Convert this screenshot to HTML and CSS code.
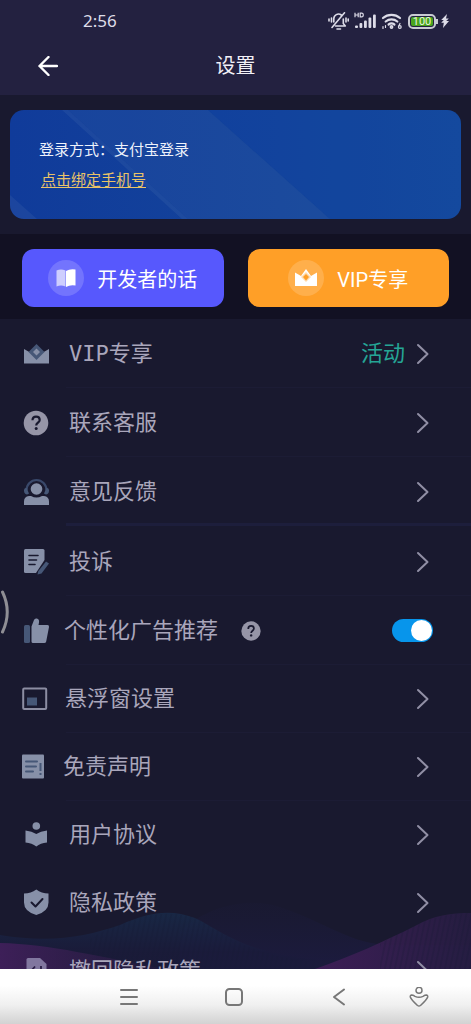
FILE: index.html
```html
<!DOCTYPE html>
<html lang="zh-CN">
<head>
<meta charset="utf-8">
<meta name="viewport" content="width=device-width, initial-scale=1">
<title>设置</title>
<link rel="stylesheet" href="styles.css">
</head>
<body>
<svg class="defs" aria-hidden="true">
  <symbol id="chevron" viewBox="0 0 14 22"><path d="M2 2l9.500 9L2 20" fill="none" stroke="currentColor" stroke-width="2" stroke-linecap="round" stroke-linejoin="round"/></symbol>
  <symbol id="question" viewBox="0 0 28 28"><circle cx="14" cy="14" r="12.300" fill="currentColor"/><path d="M10.500 11.300c0-2.300 1.500-3.700 3.600-3.700s3.600 1.300 3.600 3.300c0 2.600-3.500 3-3.500 5.600" fill="none" stroke="#19192f" stroke-width="2.200"/><circle cx="14.200" cy="19.600" r="1.500" fill="#19192f"/></symbol>
</svg>

<div class="screen">
  <header class="header">
    <div class="status">
      <span class="time">2:56</span>
      <div class="status-icons">
        <svg width="21" height="18" viewBox="0 0 21 18" fill="none" stroke="currentColor" stroke-width="1.600" stroke-linecap="round" stroke-linejoin="round">
          <path d="M5.800 10V7a4.700 4.700 0 0 1 7.500-4M15.300 7v4.500l2 2.500H7.500M16.500 .8L4 15.500M9 17h3.500M3.500 6v4M1 7v2M18 6v4M20.200 7v2"/>
        </svg>
        <svg width="22" height="18" viewBox="0 0 22 18" fill="currentColor">
          <path d="M1 .8v4.400M4.200 .8v4.400M1 3h3.200M6.200 1.200h1.500a1.500 1.500 0 0 1 1.500 1.800a1.500 1.500 0 0 1-1.500 1.800H6.200z" fill="none" stroke="currentColor" stroke-width="1.200"/>
          <rect x="1" y="13.500" width="3" height="2.500" rx="1"/><rect x="5.500" y="11" width="2.800" height="5" rx="1"/><rect x="10" y="8.500" width="2.800" height="7.500" rx="1"/><rect x="14.500" y="5.500" width="2.800" height="10.500" rx="1"/><rect x="19" y="2.500" width="2.800" height="13.500" rx="1"/>
        </svg>
        <svg width="22" height="18" viewBox="0 0 22 18" fill="none" stroke="currentColor" stroke-width="2.200" stroke-linecap="round">
          <path d="M2 6a13 13 0 0 1 17 0M4.700 9.500a9 9 0 0 1 11.600 0M7.600 12.500a5 5 0 0 1 5.800 0"/><circle cx="10.500" cy="15" r=".8"/>
          <path d="M2 14.500v2M4.500 13.500v2M19 11.500l-1.200 2.500" stroke-width="1.200"/><circle cx="18.800" cy="15" r="1.400" stroke-width="1.200"/>
        </svg>
        <div class="battery"><span class="battery-level">100</span></div>
        <svg width="8" height="14" viewBox="0 0 8 14" fill="currentColor"><path d="M6 0L.2 6h2.600L.2 8.800h2.600L2 14l6-7H5.200L7.800 4.500H5z"/></svg>
      </div>
    </div>
    <div class="titlebar">
      <button class="back" aria-label="返回"><svg width="20" height="20" viewBox="0 0 20 20" fill="none" stroke="currentColor" stroke-width="2.400" stroke-linecap="round" stroke-linejoin="round"><path d="M10.500 1L1.500 10l9 9M1.500 10H19"/></svg></button>
      <h1 class="title">设置</h1>
    </div>
  </header>

  <main class="content">
    <svg class="waves" viewBox="0 0 471 100" preserveAspectRatio="none" aria-hidden="true">
      <defs>
        <pattern id="mesh" width="5" height="5" patternUnits="userSpaceOnUse" patternTransform="skewX(-12)"><path d="M1 0v5" stroke="#14152d" stroke-width="1" opacity=".4"/></pattern>
        <linearGradient id="teal" x1="0" y1="0" x2="0" y2="1"><stop offset="0" stop-color="#182b4a"/><stop offset=".7" stop-color="#1a1b3b"/></linearGradient>
        <linearGradient id="plum" x1="0" y1="0" x2="1" y2="0"><stop offset="0" stop-color="#3d1f58"/><stop offset="1" stop-color="#3a2050" stop-opacity=".15"/></linearGradient>
        <linearGradient id="rose" x1="0" y1="0" x2="1" y2="0"><stop offset="0" stop-color="#431e5a"/><stop offset=".5" stop-color="#351e4f"/><stop offset="1" stop-color="#271d43"/></linearGradient>
        <linearGradient id="indigo" x1="0" y1="0" x2="0" y2="1"><stop offset="0" stop-color="#1b1b3a" stop-opacity=".2"/><stop offset="1" stop-color="#1c1b3f"/></linearGradient>
      </defs>
      <path d="M180 62C210 35 250 28 280 38C330 55 350 75 390 76H471V100H180Z" fill="url(#indigo)"/>
      <path d="M0 66C50 74 85 68 120 56C150 43 170 40 195 49C220 61 245 85 320 91C370 94 410 83 471 82V100H0Z" fill="url(#teal)" opacity=".8"/>
      <path d="M90 70C130 45 170 40 195 49C225 64 245 85 310 92V100H90Z" fill="url(#mesh)"/>
      <path d="M0 74C50 75 100 88 165 100H0Z" fill="url(#plum)"/>
      <path d="M315 100C350 88 385 72 415 57C435 46 450 44 471 44V100Z" fill="url(#rose)" opacity=".85"/>
      <path d="M380 75C420 50 445 44 471 44V100H380Z" fill="url(#mesh)"/>
    </svg>

    <section class="account">
      <svg class="account-art" viewBox="0 0 451 109" preserveAspectRatio="none" aria-hidden="true">
        <path d="M58 0L178 109H320L198 0Z" fill="#4a77a8" opacity=".13"/>
        <path d="M58 0L178 109H172L52 0ZM0 85L27 109H0Z" fill="#7093c0" opacity=".12"/>
        <path d="M198 0L320 109H451V0Z" fill="#0b3fa4" opacity=".2"/>
      </svg>
      <p class="login">登录方式：支付宝登录</p>
      <a class="bind" href="#bind">点击绑定手机号</a>
    </section>

    <div class="actions">
      <button class="action action-dev">
        <span class="action-icon"><svg width="20" height="20" viewBox="0 0 20 20"><path d="M.5 2.500Q5 .5 9.500 2.500V18.500Q5 16.500 .5 18.500Z" fill="#fff" opacity=".65"/><path d="M10 3Q14 .5 19.500 1.500V17.500Q14 16.500 10 19Z" fill="#fff"/></svg></span>
        开发者的话
      </button>
      <button class="action action-vip">
        <span class="action-icon"><svg width="24" height="20" viewBox="0 0 24 20"><path d="M1 4.500l6 3.500L12 1l5 7 6-3.500V18H1z" fill="#fff"/><path d="M12 4l5 5-5 5-5-5z" fill="#ffdcae"/><path d="M12 6l3 3-3 3.500L9 9z" fill="#ff9f27"/></svg></span>
        VIP专享
      </button>
    </div>

    <nav class="list" aria-label="设置项">
      <a class="row" href="#vip">
        <svg class="icon" viewBox="0 0 28 28"><path d="M2 9l7 4h11l7-4v14.500H2z" fill="#8790a8"/><path d="M14.500 4l8 8-8 8-8-8z" fill="#465777"/><path d="M14.500 8.500L18 12l-3.500 3.500L11 12z" fill="#8790a8"/></svg>
        <span class="label">VIP专享</span><span class="tag">活动</span><svg class="chevron"><use href="#chevron"/></svg>
      </a>
      <a class="row" href="#service">
        <svg class="icon icon-soft"><use href="#question"/></svg>
        <span class="label">联系客服</span><svg class="chevron"><use href="#chevron"/></svg>
      </a>
      <a class="row row-section" href="#feedback">
        <svg class="icon" viewBox="0 0 28 28"><path d="M4.500 12.500a10 10.500 0 0 1 20 0" fill="none" stroke="#39486a" stroke-width="2.200"/><path d="M2 12q0-2 2.500-2.200L7 15.500q-2 1.500-3.500.5T2 13zM27 12q0-2-2.500-2.200L22 15.500q2 1.500 3.500.5T27 13z" fill="#465777"/><circle cx="14.500" cy="11" r="5.800" fill="#8790a8"/><path d="M2 27v-3.500q0-5 5-5.500h2q5.500 3 11 0h2q5 .5 5 5.500V27z" fill="#8790a8"/></svg>
        <span class="label">意见反馈</span><svg class="chevron"><use href="#chevron"/></svg>
      </a>
      <a class="row" href="#complaint">
        <svg class="icon" viewBox="0 0 28 28"><path d="M3.500 1H21q1.500 0 1.500 1.500v9.500L14 25H3.500Q2 25 2 23.500v-21Q2 1 3.500 1z" fill="#8790a8"/><path d="M7 7.500h9M7 12h7.500M7 16.500h6" stroke="#19192f" stroke-width="1.600" stroke-linecap="round"/><path d="M24 13.500l3 2-7.500 10-4 1 .8-3.500z" fill="#465777"/></svg>
        <span class="label">投诉</span><svg class="chevron"><use href="#chevron"/></svg>
      </a>
      <div class="row row-snug">
        <svg class="icon" viewBox="0 0 28 28"><rect x="2" y="8" width="6" height="18" rx="1.500" fill="#465777"/><path d="M9.500 9.500L12 3q.7-2 2.800-1.500 2.700.5 2.200 4L16.500 8h9q1.800 0 1.500 2l-2.800 14.500q-.4 1.500-2 1.500H11q-1.500 0-1.500-1.500z" fill="#8790a8"/></svg>
        <label class="label" for="ads">个性化广告推荐</label>
        <button class="help" aria-label="说明"><svg><use href="#question"/></svg></button>
        <input class="switch" id="ads" type="checkbox" role="switch" checked>
      </div>
      <a class="row row-tight" href="#floating">
        <svg class="icon icon-medium" viewBox="0 0 26 28"><rect x="1.200" y="3.500" width="23" height="20.500" rx="1" fill="none" stroke="#8c8da2" stroke-width="2"/><rect x="5" y="12.500" width="10" height="8" fill="#465777"/></svg>
        <span class="label">悬浮窗设置</span><svg class="chevron"><use href="#chevron"/></svg>
      </a>
      <a class="row row-tight" href="#disclaimer">
        <svg class="icon icon-small" viewBox="0 0 24 28"><rect y="1.500" width="22" height="24" rx="1" fill="#8790a8"/><path d="M4 8.500h11M4 13.500h10M4 18.500h7" stroke="#465777" stroke-width="2" stroke-linecap="round"/><path d="M18.500 10v8M18.500 20v2" stroke="#465777" stroke-width="2"/></svg>
        <span class="label">免责声明</span><svg class="chevron"><use href="#chevron"/></svg>
      </a>
      <a class="row row-tight row-wide" href="#terms">
        <svg class="icon" viewBox="0 0 28 28"><circle cx="14.300" cy="5" r="3.800" fill="#8790a8"/><path d="M3.500 9.500Q10 10 14.300 13 18.500 10 25 9.500V21.500Q18.500 22 14.300 25.500 10 22 3.500 21.500z" fill="#8790a8"/></svg>
        <span class="label">用户协议</span><svg class="chevron"><use href="#chevron"/></svg>
      </a>
      <a class="row row-tight row-wide" href="#privacy">
        <svg class="icon" viewBox="0 0 28 28"><path d="M14.300 .5Q19.500 4.300 26.500 4.500v9q0 9-12.200 12.500Q2 22.500 2 13.500v-9q7-.2 12.300-4z" fill="#8790a8"/><path d="M9.500 13.500l4 4 7-7.500" fill="none" stroke="#19192f" stroke-width="2" stroke-linecap="round" stroke-linejoin="round"/></svg>
        <span class="label">隐私政策</span><svg class="chevron"><use href="#chevron"/></svg>
      </a>
      <a class="row row-tight row-wide row-last" href="#withdraw">
        <svg class="icon" viewBox="0 0 28 28"><path d="M6 1h12l6.500 6v18H6q-1.500 0-1.500-1.500v-21Q4.500 1 6 1z" fill="#81779f"/><path d="M13 9.500l-3.500 4 3.500 4M10 13.500h9V9" fill="none" stroke="#2a1e46" stroke-width="1.800"/></svg>
        <span class="label">撤回隐私政策</span><svg class="chevron"><use href="#chevron"/></svg>
      </a>
    </nav>
  </main>

  <footer class="navbar">
    <button class="nav-item" aria-label="菜单"><svg width="20" height="20" viewBox="0 0 20 20"><path d="M2 3h16M2 10h16M2 17h16"/></svg></button>
    <button class="nav-item" aria-label="主页"><svg width="20" height="20" viewBox="0 0 20 20"><rect x="2" y="2" width="16" height="16" rx="3.500"/></svg></button>
    <button class="nav-item" aria-label="后退"><svg width="20" height="20" viewBox="0 0 20 20"><path d="M15 2.500L5 10l10 7.500"/></svg></button>
    <button class="nav-item nav-thin" aria-label="辅助"><svg width="20" height="20" viewBox="0 0 20 20"><circle cx="10" cy="3.300" r="3"/><path d="M2.500 8Q1 8.500 1.300 10 2 12.500 8.500 18.500q1.500 1 3 0Q18 12.500 18.700 10 19 8.500 17.500 8 16 8 14 9.300q-4 2-8 0Q4 8 2.500 8z"/></svg></button>
  </footer>

  <svg class="edge-handle" viewBox="0 0 10 44" aria-hidden="true"><path d="M2.500 2Q12 22 2.500 42" fill="none" stroke="#8f8e94" stroke-width="3" stroke-linecap="round"/></svg>
</div>
</body>
</html>
```

FILE: styles.css
```css
* { box-sizing: border-box; }

body {
  margin: 0;
  background: #19192f;
  color: #a9a6bb;
  font-family: Roboto, "Noto Sans CJK SC", sans-serif;
}

button {
  padding: 0;
  border: 0;
  background: none;
  color: inherit;
  font: inherit;
}

a { color: inherit; text-decoration: none; }

svg { flex: none; display: block; }

.defs { position: absolute; width: 0; height: 0; }

.screen {
  position: relative;
  display: flex;
  flex-direction: column;
  height: 100vh;
  overflow: hidden;
}

.header {
  flex: none;
  padding-bottom: 6px;
  background: #232140;
  color: #f1f0f7;
}

.status {
  display: flex;
  align-items: center;
  justify-content: space-between;
  height: 42px;
  padding: 0 22px 0 83px;
  color: #dddce8;
}

.time { font: 17px/20px "Noto Sans", sans-serif; }

.status-icons { display: flex; align-items: center; gap: 5px; }

.battery {
  position: relative;
  width: 28px;
  height: 15px;
  padding: 1px;
  border: 2px solid #c9cbd3;
  border-radius: 5px;
}

.battery::after {
  content: "";
  position: absolute;
  top: 3px;
  right: -4px;
  width: 2px;
  height: 5px;
  background: #c9cbd3;
}

.battery-level {
  display: block;
  border-radius: 2px;
  background: #49a51e;
  color: #e9f7dd;
  font-size: 11px;
  line-height: 9px;
  text-align: center;
}

.titlebar {
  display: grid;
  grid-template-columns: 58px 1fr 58px;
  align-items: center;
  height: 47px;
}

.back { justify-self: end; color: #fff; }

.title {
  margin: 0;
  font-size: 20px;
  font-weight: 400;
  line-height: 30px;
  text-align: center;
}

.content {
  position: relative;
  flex: 1;
  min-height: 0;
  padding-top: 15px;
  overflow: hidden;
}

.waves {
  position: absolute;
  right: 0;
  bottom: 0;
  width: 100%;
  height: 100px;
}

.account {
  position: relative;
  margin: 0 10px 15px;
  padding: 29px 29px 28px;
  overflow: hidden;
  border-radius: 14px;
  background: linear-gradient(90deg, #103b9a, #14449b 60%, #174b9d);
  color: #eef2fb;
  font-size: 15px;
  line-height: 22px;
}

.account-art {
  position: absolute;
  inset: 0;
  width: 100%;
  height: 100%;
}

.login { position: relative; margin: 0 0 8px; }

.bind {
  position: relative;
  display: inline-block;
  margin-left: 2px;
  color: #e9c368;
  text-decoration: underline;
  text-underline-offset: 2px;
}

.actions {
  display: grid;
  grid-template-columns: 1fr 1fr;
  gap: 24px;
  padding: 15px 22px 12px;
  background: #121123;
}

.action {
  display: flex;
  align-items: center;
  justify-content: center;
  gap: 13px;
  height: 58px;
  border-radius: 12px;
  color: #fff;
  font-size: 20px;
}

.action-dev { background: #5758fd; }
.action-vip { background: #ff9f27; }

.action-icon {
  display: grid;
  place-items: center;
  width: 36px;
  height: 36px;
  border-radius: 50%;
  background: rgba(255, 255, 255, .17);
}

.list { position: relative; }

.row {
  position: relative;
  display: flex;
  align-items: center;
  gap: 19px;
  height: 69px;
  padding: 0 41px 0 22px;
  font-family: "DejaVu Sans Mono", "Noto Sans CJK SC", monospace;
  font-size: 22px;
  line-height: 32px;
}

.row::after {
  content: "";
  position: absolute;
  right: 0;
  bottom: 0;
  left: 66px;
  height: 1px;
  background: #1c1c35;
}

.row-section { margin-bottom: 1px; }
.row-section::after { height: 3px; background: #1d1e3c; }
.row-snug { gap: 14px; }
.row-tight { height: 68px; gap: 17px; }
.row-wide { gap: 19px; }
.row-wide::after { display: none; }

.icon { width: 28px; height: 28px; }
.icon-medium { width: 26px; }
.icon-small { width: 24px; }
.icon-soft { color: #9695a7; }

.tag { margin-left: auto; color: #25a596; }

.chevron {
  width: 14px;
  height: 22px;
  margin-left: auto;
  color: #918fa5;
}

.tag + .chevron { margin-left: -8px; }

.help { margin-left: 8px; color: #9695a7; }
.help svg { width: 22px; height: 22px; }

.switch {
  appearance: none;
  position: relative;
  width: 41px;
  height: 23px;
  margin: 0 -3px 0 auto;
  border-radius: 12px;
  background: #454458;
}

.switch::before {
  content: "";
  position: absolute;
  top: 1px;
  left: 1px;
  width: 21px;
  height: 21px;
  border-radius: 50%;
  background: #fff;
}

.switch:checked { background: #0795eb; }
.switch:checked::before { right: 1px; left: auto; }

.navbar {
  flex: none;
  display: grid;
  grid-template-columns: 1fr 1fr 1fr 55px;
  justify-items: center;
  align-items: center;
  height: 55px;
  padding: 0 25px 0 76px;
  background: linear-gradient(#fff 30%, #f0f0f0 65%, #d2d2d2);
}

.nav-item svg {
  fill: none;
  stroke: #777;
  stroke-width: 2;
  stroke-linecap: round;
  stroke-linejoin: round;
}

.nav-thin svg { stroke-width: 1.5px; }

.edge-handle {
  position: absolute;
  top: 590px;
  left: 0;
  width: 10px;
  height: 44px;
}
```
